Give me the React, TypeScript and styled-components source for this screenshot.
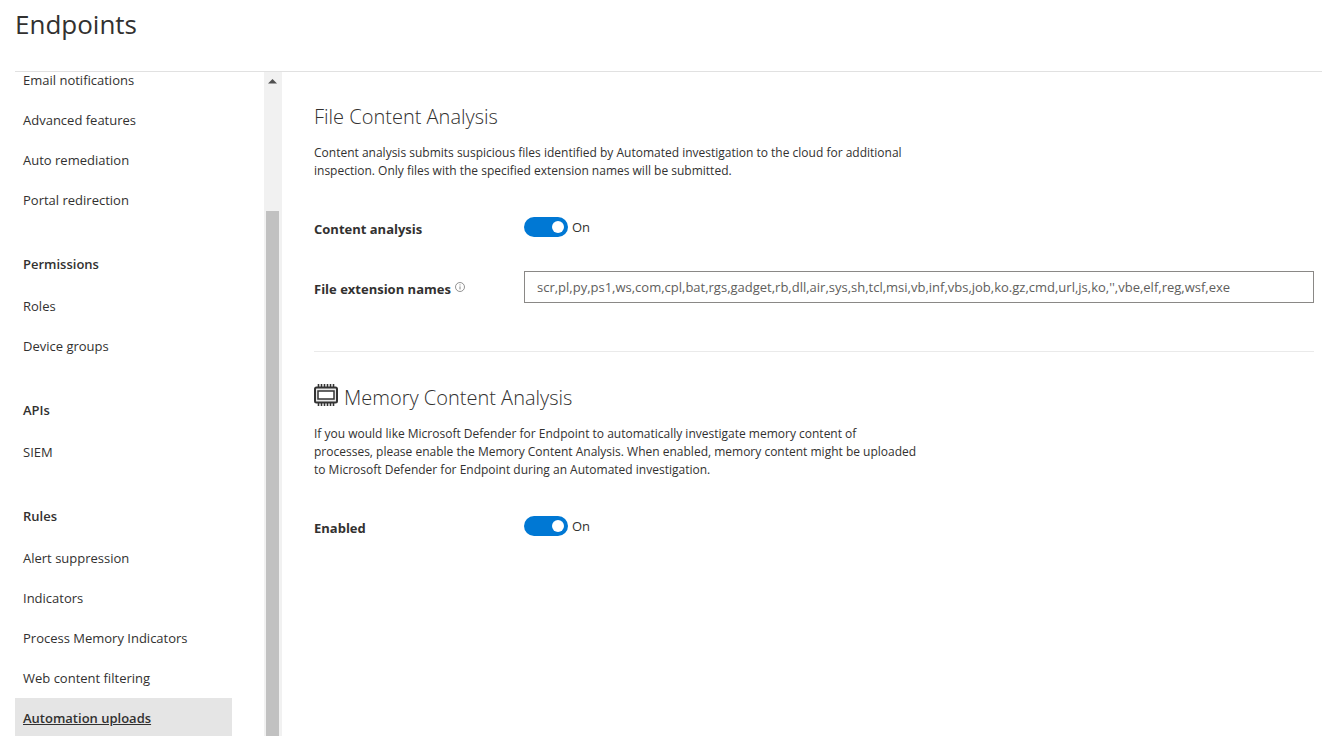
import React, { useId, useState } from "react";
import styled, { createGlobalStyle } from "styled-components";

const GlobalStyle = createGlobalStyle`
  *, *::before, *::after { box-sizing: border-box; }
  body {
    margin: 0;
    background: #fff;
    color: #323130;
    font-family: "Segoe UI", "Open Sans", "Noto Sans", sans-serif;
    font-size: 13px;
  }
`;

const Page = styled.div`
  display: flex;
  flex-direction: column;
  height: 100vh;
  padding-left: 15px;
`;

const PageHeader = styled.header`
  flex: none;
  height: 72px;
  padding-top: 6px;
  border-bottom: 1px solid #e1e1e1;
`;

const PageTitle = styled.h1`
  margin: 0;
  font-size: 26px;
  font-weight: 400;
  line-height: 36px;
`;

const Body = styled.div`
  display: flex;
  flex: 1;
  min-height: 0;
`;

const Sidebar = styled.nav`
  flex: none;
  width: 249px;
  padding-right: 32px;
  overflow: hidden;
`;

const SidebarContent = styled.div`
  margin-top: -12px;
`;

const GroupTitle = styled.h2`
  margin: 0;
  padding: 34px 8px 12px;
  font-size: 13px;
  font-weight: 600;
  line-height: 20px;
`;

const NavList = styled.ul`
  margin: 0;
  padding: 0;
  list-style: none;
`;

const NavLink = styled.a<{ $active?: boolean }>`
  display: block;
  padding: 10px 8px;
  color: inherit;
  line-height: 20px;
  background: ${(p) => (p.$active ? "#e5e5e5" : "transparent")};
  font-weight: ${(p) => (p.$active ? 600 : 400)};
  text-decoration: ${(p) => (p.$active ? "underline" : "none")};
`;

const ScrollTrack = styled.div`
  display: flex;
  flex: none;
  flex-direction: column;
  width: 18px;
  padding: 0 3px 0 2px;
  background: #f1f1f1;
`;

const ScrollArrow = styled.svg`
  display: block;
  flex: none;
  width: 13px;
  height: 18px;
`;

const ScrollThumb = styled.div`
  flex: 1;
  margin-top: 121px;
  background: #c1c1c1;
`;

const Content = styled.main`
  flex: 1;
  min-width: 0;
  padding: 30px 8px 0 32px;
`;

const Section = styled.section`
  & + & {
    margin-top: 48px;
    padding-top: 31px;
    border-top: 1px solid #eaeaea;
  }
`;

const SectionTitle = styled.h2`
  display: flex;
  gap: 6px;
  margin: 0;
  font-size: 20px;
  font-weight: 300;
  line-height: 30px;
`;

const Description = styled.p`
  max-width: 603px;
  margin: 12px 0 31px;
  font-size: 12px;
  line-height: 18px;
`;

const FieldRow = styled.div`
  display: flex;
  align-items: center;
  min-height: 32px;

  & + & {
    margin-top: 28px;
  }
`;

const FieldLabel = styled.div`
  display: flex;
  flex: none;
  gap: 4px;
  width: 210px;
  padding-top: 4px;
  font-weight: 700;
  line-height: 20px;
`;

const InfoGlyph = styled.svg`
  width: 10px;
  height: 10px;
  margin-top: 3px;
`;

const ToggleLabel = styled.label`
  display: flex;
  gap: 4px;
  line-height: 20px;
`;

const ToggleInput = styled.input`
  appearance: none;
  display: flex;
  align-items: center;
  width: 44px;
  height: 20px;
  margin: 0;
  padding: 0 4px;
  border-radius: 10px;
  background: #8a8886;
  cursor: pointer;

  &::before {
    content: "";
    width: 12px;
    height: 12px;
    border-radius: 50%;
    background: #fff;
  }

  &:checked {
    justify-content: flex-end;
    background: #0078d4;
  }
`;

const TextInput = styled.input`
  flex: 1;
  min-width: 0;
  height: 32px;
  padding: 0 12px;
  border: 1px solid #8a8886;
  border-radius: 0;
  background: #fff;
  color: #605e5c;
  font-family: inherit;
  font-size: 13px;
`;

const ChipGlyph = styled.svg`
  flex: none;
  width: 24px;
  height: 24px;
`;

function ChipIcon() {
  const pins = [4, 7, 10, 13, 16, 19];
  return (
    <ChipGlyph viewBox="0 0 24 24" fill="none" stroke="#333" aria-hidden="true">
      {pins.map((x) => (
        <path key={x} d={`M${x + 0.5} 1v3M${x + 0.5} 20v3`} strokeWidth="1.6" />
      ))}
      <rect x="1" y="4.5" width="22" height="15" rx="1.5" fill="#e8e8e8" strokeWidth="2" />
      <rect x="4" y="8" width="16" height="8" fill="#fff" strokeWidth="1.5" />
    </ChipGlyph>
  );
}

function InfoIcon() {
  return (
    <InfoGlyph viewBox="0 0 10 10" fill="none" stroke="#777" role="img" aria-label="Info">
      <circle cx="5" cy="5" r="4.5" strokeWidth="0.8" />
      <path d="M5 4.4v3M5 2.4v1" strokeWidth="0.9" />
    </InfoGlyph>
  );
}

function ToggleField({ label }: { label: string }) {
  const [on, setOn] = useState(true);
  const id = useId();
  return (
    <FieldRow>
      <FieldLabel id={id}>{label}</FieldLabel>
      <ToggleLabel>
        <ToggleInput
          type="checkbox"
          role="switch"
          aria-labelledby={id}
          checked={on}
          onChange={(e) => setOn(e.target.checked)}
        />
        {on ? "On" : "Off"}
      </ToggleLabel>
    </FieldRow>
  );
}

const groups: { title?: string; items: string[] }[] = [
  { items: ["Email notifications", "Advanced features", "Auto remediation", "Portal redirection"] },
  { title: "Permissions", items: ["Roles", "Device groups"] },
  { title: "APIs", items: ["SIEM"] },
  {
    title: "Rules",
    items: [
      "Alert suppression",
      "Indicators",
      "Process Memory Indicators",
      "Web content filtering",
      "Automation uploads",
    ],
  },
];

const current = "Automation uploads";

export default function App() {
  const [extensions, setExtensions] = useState(
    "scr,pl,py,ps1,ws,com,cpl,bat,rgs,gadget,rb,dll,air,sys,sh,tcl,msi,vb,inf,vbs,job,ko.gz,cmd,url,js,ko,'',vbe,elf,reg,wsf,exe"
  );

  return (
    <>
      <GlobalStyle />
      <Page>
        <PageHeader>
          <PageTitle>Endpoints</PageTitle>
        </PageHeader>
        <Body>
          <Sidebar>
            <SidebarContent>
              {groups.map((group, i) => (
                <div key={i}>
                  {group.title && <GroupTitle>{group.title}</GroupTitle>}
                  <NavList>
                    {group.items.map((item) => (
                      <li key={item}>
                        <NavLink
                          href="#"
                          $active={item === current}
                          aria-current={item === current ? "page" : undefined}
                        >
                          {item}
                        </NavLink>
                      </li>
                    ))}
                  </NavList>
                </div>
              ))}
            </SidebarContent>
          </Sidebar>
          <ScrollTrack aria-hidden="true">
            <ScrollArrow viewBox="0 0 13 18">
              <path d="M2 11.5h9L6.5 7z" fill="#505050" />
            </ScrollArrow>
            <ScrollThumb />
          </ScrollTrack>
          <Content>
            <Section>
              <SectionTitle>File Content Analysis</SectionTitle>
              <Description>
                Content analysis submits suspicious files identified by Automated investigation to the cloud for
                additional inspection. Only files with the specified extension names will be submitted.
              </Description>
              <ToggleField label="Content analysis" />
              <FieldRow>
                <FieldLabel>
                  <label htmlFor="extensions">File extension names</label>
                  <InfoIcon />
                </FieldLabel>
                <TextInput
                  id="extensions"
                  type="text"
                  value={extensions}
                  onChange={(e) => setExtensions(e.target.value)}
                />
              </FieldRow>
            </Section>
            <Section>
              <SectionTitle>
                <ChipIcon />
                Memory Content Analysis
              </SectionTitle>
              <Description>
                If you would like Microsoft Defender for Endpoint to automatically investigate memory content of
                processes, please enable the Memory Content Analysis. When enabled, memory content might be uploaded to
                Microsoft Defender for Endpoint during an Automated investigation.
              </Description>
              <ToggleField label="Enabled" />
            </Section>
          </Content>
        </Body>
      </Page>
    </>
  );
}
